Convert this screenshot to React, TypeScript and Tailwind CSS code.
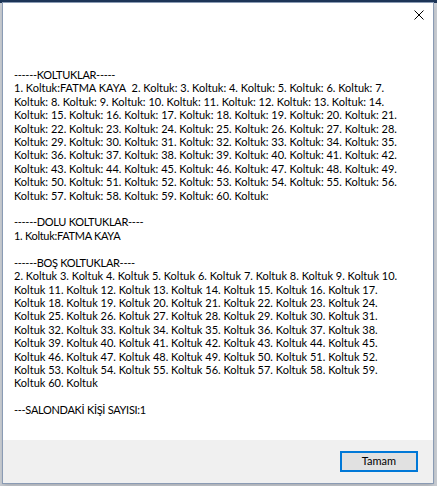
const seats = Array.from({ length: 60 }, (_, i) => i + 1);

function chunk(items: string[], first: number, size: number) {
    const rows: string[][] = [items.slice(0, first)];
    for (let i = first; i < items.length; i += size) rows.push(items.slice(i, i + size));
    return rows;
}

// seat list, wrapped the way the message box does
const allTokens: string[] = [];
seats.forEach((n) => {
    allTokens.push(`${n}.`);
    allTokens.push(n === 1 ? 'Koltuk:FATMA KAYA ' : 'Koltuk:');
});
const allLines = chunk(allTokens, 13, 14).map((row) => row.join(' '));

const freeTokens: string[] = [];
seats.slice(1).forEach((n) => {
    freeTokens.push(`${n}.`);
    freeTokens.push('Koltuk');
});
const freeLines = chunk(freeTokens, 17, 14).map((row) => row.join(' '));

export default function App() {
    return (
        <div className="w-[437px] h-[486px] bg-[#c9cdd3] relative overflow-hidden" style={{ fontFamily: 'Lato, "Noto Sans", sans-serif' }}>
            <div className="h-[3px] bg-[#1d3557]" />
            <div className="absolute left-[2px] top-[2px] w-[432px] h-[482px] bg-white border border-[#8a9bb4] flex flex-col shadow-md">
                <div className="h-[65px] flex justify-end items-start pt-[7px] pr-[9px]">
                    <svg width="10" height="10" viewBox="0 0 10 10">
                        <path d="M0.5 0.5 L9.5 9.5 M9.5 0.5 L0.5 9.5" stroke="#000" strokeWidth="1" />
                    </svg>
                </div>
                <div className="flex-1 pl-[11px] text-[11px] leading-[13.4px] text-black whitespace-pre">
                    <div className="tracking-[-0.3px]">------KOLTUKLAR-----</div>
                    {allLines.map((l, i) => (
                        <div key={i}>{l}</div>
                    ))}
                    <div>&nbsp;</div>
                    <div className="tracking-[-0.3px]">------DOLU KOLTUKLAR----</div>
                    <div className="tracking-[-0.3px]">1. Koltuk:FATMA KAYA</div>
                    <div>&nbsp;</div>
                    <div className="tracking-[-0.3px]">------BOŞ KOLTUKLAR----</div>
                    {freeLines.map((l, i) => (
                        <div key={i}>{l}</div>
                    ))}
                    <div>&nbsp;</div>
                    <div className="tracking-[-0.3px]">---SALONDAKİ KİŞİ SAYISI:1</div>
                </div>
                <div className="h-[43px] bg-[#f0f0f0] flex justify-end items-start pt-[11px] pr-[15px]">
                    <button className="w-[78px] h-[21px] bg-[#e1e1e1] border-2 border-[#0078d7] text-[11px] text-black flex items-center justify-center">
                        Tamam
                    </button>
                </div>
            </div>
        </div>
    );
}
